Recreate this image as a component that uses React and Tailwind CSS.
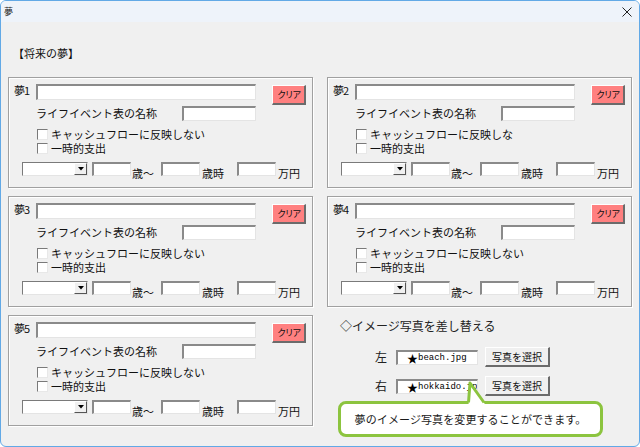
import React from 'react';

function TextBox({ className = '', children }) {
  return (
    <div
      className={
        'box-border bg-white border-t-2 border-l-2 border-t-[#8a8a8a] border-l-[#8a8a8a] border-b border-r border-b-[#e4e4e4] border-r-[#e4e4e4] overflow-hidden whitespace-nowrap ' +
        className
      }
    >
      {children}
    </div>
  );
}

function CheckRow({ label, className = '' }) {
  return (
    <div className={'flex items-center h-[12px] pl-[28px] ' + className}>
      <span className="box-border w-[11px] h-[11px] bg-white border-t border-l border-t-[#7a7a7a] border-l-[#7a7a7a] border-b border-r border-b-[#e8e8e8] border-r-[#e8e8e8]" />
      <span className="ml-[3px] text-[11px] leading-[12px] text-[#111]">{label}</span>
    </div>
  );
}

function Combo() {
  return (
    <div className="box-border w-[66px] h-[14px] bg-white border-t border-l border-t-[#7a7a7a] border-l-[#7a7a7a] border-b border-r border-b-[#e4e4e4] border-r-[#e4e4e4] flex justify-end items-start">
      <div className="box-border w-[13px] h-[12px] bg-[#f0f0f0] border-t border-l border-t-white border-l-white border-b border-r border-b-[#555] border-r-[#555] flex items-center justify-center">
        <svg width="6" height="4" viewBox="0 0 6 4">
          <polygon points="0,0 6,0 3,3.5" fill="#000" />
        </svg>
      </div>
    </div>
  );
}

function DreamPanel({ n, cashflow }) {
  return (
    <div className="box-border h-[111px] border border-[#a0a0a0] shadow-[inset_1px_1px_0_#ffffff,1px_1px_0_#ffffff] pt-[6px]">
      {/* 名前 + クリア */}
      <div className="flex items-start pl-[5px]">
        <span className="w-[22px] mt-[1px] text-[11px] leading-[11px] tracking-[-1px] text-[#111]">夢{n}</span>
        <TextBox className="w-[220px] h-[16px]" />
        <button className="box-border ml-[16px] mt-[1px] w-[34px] h-[20px] bg-[#ff8080] border-t border-l border-t-white border-l-white border-b-2 border-r-2 border-b-[#6b6b6b] border-r-[#6b6b6b] text-[9px] leading-[9px] tracking-[-1.5px] text-[#111] flex items-center justify-center">
          クリア
        </button>
      </div>

      {/* ライフイベント表の名称 */}
      <div className="flex items-center pl-[27px] mt-[1px]">
        <span className="w-[146px] text-[11px] leading-[11px] text-[#111]">ライフイベント表の名称</span>
        <TextBox className="w-[74px] h-[15px]" />
      </div>

      <CheckRow label={cashflow} className="mt-[7px]" />
      <CheckRow label="一時的支出" className="mt-[2px]" />

      {/* 年齢・金額 */}
      <div className="flex items-start pl-[13px] mt-[8px]">
        <Combo />
        <TextBox className="ml-[4px] w-[39px] h-[14px]" />
        <span className="w-[30px] pl-[1px] mt-[6px] text-[11px] leading-[11px] text-[#111]">歳〜</span>
        <TextBox className="w-[39px] h-[14px]" />
        <span className="w-[37px] pl-[2px] mt-[6px] text-[11px] leading-[11px] text-[#111]">歳時</span>
        <TextBox className="w-[39px] h-[14px]" />
        <span className="pl-[2px] mt-[6px] text-[11px] leading-[11px] text-[#111]">万円</span>
      </div>
    </div>
  );
}

function PhotoRow({ side, file, className = '' }) {
  return (
    <div className={'flex items-center h-[20px] ' + className}>
      <span className="ml-[35px] w-[21px] text-[12px] leading-[12px] text-[#222]">{side}</span>
      <TextBox className="w-[82px] h-[15px] pl-[9px] flex items-center text-black">
        <span className="text-[11px] leading-[10px]">★</span>
        <span className="font-['Liberation_Mono',monospace] text-[9px] leading-[10px]">{file}</span>
      </TextBox>
      <button className="box-border ml-[7px] w-[65px] h-[20px] bg-[#f0f0f0] border-t border-l border-t-white border-l-white border-b-2 border-r-2 border-b-[#6b6b6b] border-r-[#6b6b6b] text-[10px] leading-[10px] text-[#111] flex items-center justify-center">
        写真を選択
      </button>
    </div>
  );
}

export default function App() {
  return (
    <div className="relative box-border w-[640px] h-[447px] flex flex-col border border-[#62a9e6] rounded-[6px] overflow-hidden bg-[#f0f0f0] font-['Noto_Sans_CJK_JP',sans-serif]">
      {/* Title bar */}
      <div className="h-[21px] shrink-0 bg-[#eef3fa] flex items-center justify-between pl-[3px] pr-[7px]">
        <span className="text-[9px] leading-[9px] text-[#222]">夢</span>
        <svg width="10" height="10" viewBox="0 0 10 10">
          <path d="M0.5 0.5 L9.5 9.5 M9.5 0.5 L0.5 9.5" stroke="#222" strokeWidth="1" />
        </svg>
      </div>

      {/* Body */}
      <div className="flex-1 pt-[25px]">
        <div className="pl-[12px] text-[11px] leading-[12px] text-[#111]">【将来の夢】</div>

        <div className="mt-[18px] pl-[7px] grid grid-cols-[305px_305px] gap-x-[14px] gap-y-[8px]">
          <DreamPanel n={1} cashflow="キャッシュフローに反映しない" />
          <DreamPanel n={2} cashflow="キャッシュフローに反映しな" />
          <DreamPanel n={3} cashflow="キャッシュフローに反映しない" />
          <DreamPanel n={4} cashflow="キャッシュフローに反映しない" />
          <DreamPanel n={5} cashflow="キャッシュフローに反映しない" />

          {/* 写真の差し替え */}
          <div className="h-[111px] pt-[5px] pl-[13px]">
            <div className="text-[12px] leading-[12px] text-[#222]">◇イメージ写真を差し替える</div>
            <PhotoRow side="左" file="beach.jpg" className="mt-[15px]" />
            <PhotoRow side="右" file="hokkaido.jpg" className="mt-[9px]" />
          </div>
        </div>
      </div>

      {/* Callout */}
      <div className="absolute left-[337px] top-[400px] box-border w-[265px] h-[36px] bg-white border-[3px] border-[#8cc43f] rounded-[8px] flex items-center justify-center text-[11px] leading-[11px] tracking-[0.1px] text-[#1a1a1a]">
        夢のイメージ写真を変更することができます。
      </div>
      <svg className="absolute left-[463px] top-[379px]" width="24" height="26" viewBox="0 0 24 26">
        <path d="M4.5 25 L6 3 L21.5 25 Z" fill="#ffffff" />
        <path d="M4.5 22.5 L6 3 L20 22.5" fill="none" stroke="#8cc43f" strokeWidth="3" strokeLinejoin="round" />
      </svg>
    </div>
  );
}
